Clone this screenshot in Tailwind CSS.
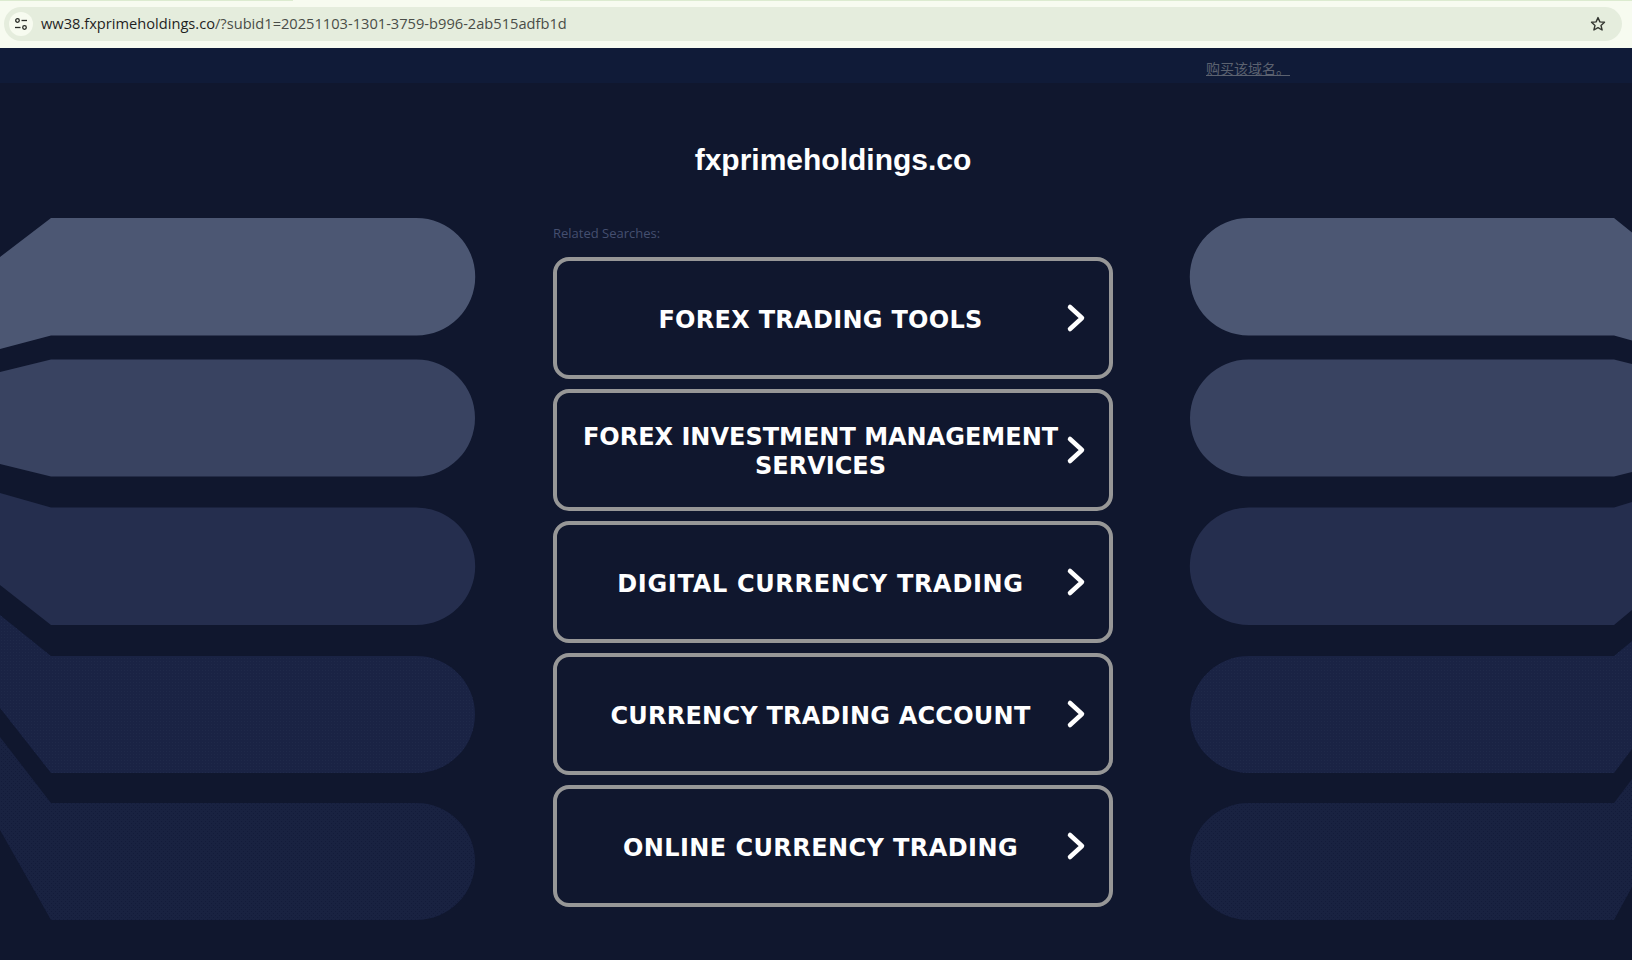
<!DOCTYPE html>
<html lang="en">

<head>
    <meta charset="UTF-8">
    <title>fxprimeholdings.co</title>
    <script src="https://cdn.jsdelivr.net/npm/@tailwindcss/browser@4"></script>
</head>

<body class="bg-[#10172e] h-[960px] w-[1632px] overflow-hidden relative font-['Liberation_Sans',sans-serif]">
    <!-- Background shapes -->
    <svg class="absolute left-0 top-0" width="1632" height="960" viewBox="0 0 1632 960">
        <defs>
            <pattern id="dots" width="4" height="4" patternUnits="userSpaceOnUse">
                <rect x="1" y="1" width="1" height="1" fill="#131b3a" />
                <rect x="3" y="3" width="1" height="1" fill="#131b3a" />
            </pattern>
            <pattern id="dotsFine" width="3" height="3" patternUnits="userSpaceOnUse">
                <rect x="1" y="1" width="1" height="1" fill="#1f2949" />
            </pattern>
        </defs>
        <!-- left -->
        <path d="M0 257L51 218H416.500A58.500 58.500 0 0 1 416.500 335.500H51L0 349Z" fill="#4c5773" />
        <path d="M0 372L51 359.500H416.500A58.500 58.500 0 0 1 416.500 476.500H51L0 464Z" fill="#394361" />
        <path d="M0 493L51 507.500H416.500A58.500 58.500 0 0 1 416.500 625H51L0 585Z" fill="#252e4e" />
        <path d="M0 615L51 656H416.500A58.500 58.500 0 0 1 416.500 773H51L0 708Z" fill="#1a2344" />
        <path d="M0 615L51 656H416.500A58.500 58.500 0 0 1 416.500 773H51L0 708Z" fill="url(#dotsFine)" />
        <path d="M0 737L51 803H416.500A58.500 58.500 0 0 1 416.500 920H51L0 830Z" fill="#192241" />
        <path d="M0 737L51 803H416.500A58.500 58.500 0 0 1 416.500 920H51L0 830Z" fill="url(#dots)" />
        <!-- right -->
        <path d="M1632 232.500L1614 218H1248.500A58.500 58.500 0 0 0 1248.500 335.500H1614L1632 340.500Z" fill="#4c5773" />
        <path d="M1632 364L1614 359.500H1248.500A58.500 58.500 0 0 0 1248.500 476.500H1614L1632 472Z" fill="#394361" />
        <path d="M1632 502L1614 507.500H1248.500A58.500 58.500 0 0 0 1248.500 625H1614L1632 610Z" fill="#252e4e" />
        <path d="M1632 641L1614 656H1248.500A58.500 58.500 0 0 0 1248.500 773H1614L1632 749Z" fill="#1a2344" />
        <path d="M1632 641L1614 656H1248.500A58.500 58.500 0 0 0 1248.500 773H1614L1632 749Z" fill="url(#dotsFine)" />
        <path d="M1632 779L1614 803H1248.500A58.500 58.500 0 0 0 1248.500 920H1614L1632 887Z" fill="#192241" />
        <path d="M1632 779L1614 803H1248.500A58.500 58.500 0 0 0 1248.500 920H1614L1632 887Z" fill="url(#dots)" />
    </svg>

    <!-- Browser address bar -->
    <div class="relative h-[48px] bg-[#f7fbf0] border-t border-[#dcebd0] px-[4px] pt-[6px]">
        <div class="absolute top-[-1px] left-[293px] w-[247px] h-[1px] bg-[#f7fbf0]"></div>
        <div class="h-[34px] w-[1618px] rounded-full bg-[#e5eddd] flex items-center pl-[5px] pr-[16px]">
            <div class="w-[24px] h-[24px] rounded-full bg-[#f7fbf0] flex items-center justify-center">
                <svg width="16" height="16" viewBox="0 0 16 16" fill="none" stroke="#2a2d28" stroke-width="1.300">
                    <circle cx="4.500" cy="4.500" r="1.800" />
                    <path d="M8.500 4.500H14" />
                    <circle cx="11.500" cy="11.500" r="1.800" />
                    <path d="M2 11.500H7.500" />
                </svg>
            </div>
            <div class="ml-[8px] text-[14.650px] text-[#1f1f1f] font-['Open_Sans',sans-serif]">ww38.fxprimeholdings.co<span class="text-[#4a4d48]">/?subid1=20251103-1301-3759-b996-2ab515adfb1d</span></div>
            <svg class="ml-auto" width="16" height="16" viewBox="0 0 16 16" fill="none" stroke="#333630" stroke-width="1.400" stroke-linejoin="round">
                <path d="M8 1.600L9.900 5.900L14.500 6.300L11 9.400L12.100 14L8 11.600L3.900 14L5 9.400L1.500 6.300L6.100 5.900Z" />
            </svg>
        </div>
    </div>

    <!-- Buy domain strip -->
    <div class="relative h-[35px] bg-[#101b38] pl-[1206px] pt-[9px]">
        <a href="#" class="text-[14px] leading-[18px] text-[#5c6270] underline font-['Noto_Sans_CJK_SC',sans-serif]">购买该域名。</a>
    </div>

    <main class="relative w-[560px] ml-[553px]">
        <h1 class="mt-[58px] h-[38px] text-center text-[30px] leading-[38px] font-bold text-white">fxprimeholdings.co</h1>
        <p class="mt-[45px] h-[18px] text-[13px] leading-[18px] text-[#454f70] font-['Open_Sans',sans-serif]">Related Searches:</p>
        <div class="mt-[15px] flex flex-col gap-[10px]">
            <a href="#" class="h-[122px] rounded-[16px] border-4 border-[#979797] flex items-center pl-[19px] pr-[20px] font-['DejaVu_Sans',sans-serif]">
                <span class="flex-1 pt-[4px] text-center text-[24px] leading-[29px] font-bold text-white tracking-[0.29px]">FOREX TRADING TOOLS</span>
                <svg width="24" height="32" viewBox="0 0 24 32" fill="none" stroke="#fff" stroke-width="4.500" stroke-linecap="round" stroke-linejoin="round"><path d="M5 5L17 16L5 27" /></svg>
            </a>
            <a href="#" class="h-[122px] rounded-[16px] border-4 border-[#979797] flex items-center pl-[19px] pr-[20px] font-['DejaVu_Sans',sans-serif]">
                <span class="flex-1 pt-[4px] text-center text-[24px] leading-[29px] font-bold text-white">FOREX INVESTMENT MANAGEMENT SERVICES</span>
                <svg width="24" height="32" viewBox="0 0 24 32" fill="none" stroke="#fff" stroke-width="4.500" stroke-linecap="round" stroke-linejoin="round"><path d="M5 5L17 16L5 27" /></svg>
            </a>
            <a href="#" class="h-[122px] rounded-[16px] border-4 border-[#979797] flex items-center pl-[19px] pr-[20px] font-['DejaVu_Sans',sans-serif]">
                <span class="flex-1 pt-[4px] text-center text-[24px] leading-[29px] font-bold text-white tracking-[0.68px]">DIGITAL CURRENCY TRADING</span>
                <svg width="24" height="32" viewBox="0 0 24 32" fill="none" stroke="#fff" stroke-width="4.500" stroke-linecap="round" stroke-linejoin="round"><path d="M5 5L17 16L5 27" /></svg>
            </a>
            <a href="#" class="h-[122px] rounded-[16px] border-4 border-[#979797] flex items-center pl-[19px] pr-[20px] font-['DejaVu_Sans',sans-serif]">
                <span class="flex-1 pt-[4px] text-center text-[24px] leading-[29px] font-bold text-white tracking-[0.23px]">CURRENCY TRADING ACCOUNT</span>
                <svg width="24" height="32" viewBox="0 0 24 32" fill="none" stroke="#fff" stroke-width="4.500" stroke-linecap="round" stroke-linejoin="round"><path d="M5 5L17 16L5 27" /></svg>
            </a>
            <a href="#" class="h-[122px] rounded-[16px] border-4 border-[#979797] flex items-center pl-[19px] pr-[20px] font-['DejaVu_Sans',sans-serif]">
                <span class="flex-1 pt-[4px] text-center text-[24px] leading-[29px] font-bold text-white tracking-[0.42px]">ONLINE CURRENCY TRADING</span>
                <svg width="24" height="32" viewBox="0 0 24 32" fill="none" stroke="#fff" stroke-width="4.500" stroke-linecap="round" stroke-linejoin="round"><path d="M5 5L17 16L5 27" /></svg>
            </a>
        </div>
    </main>
</body>

</html>
